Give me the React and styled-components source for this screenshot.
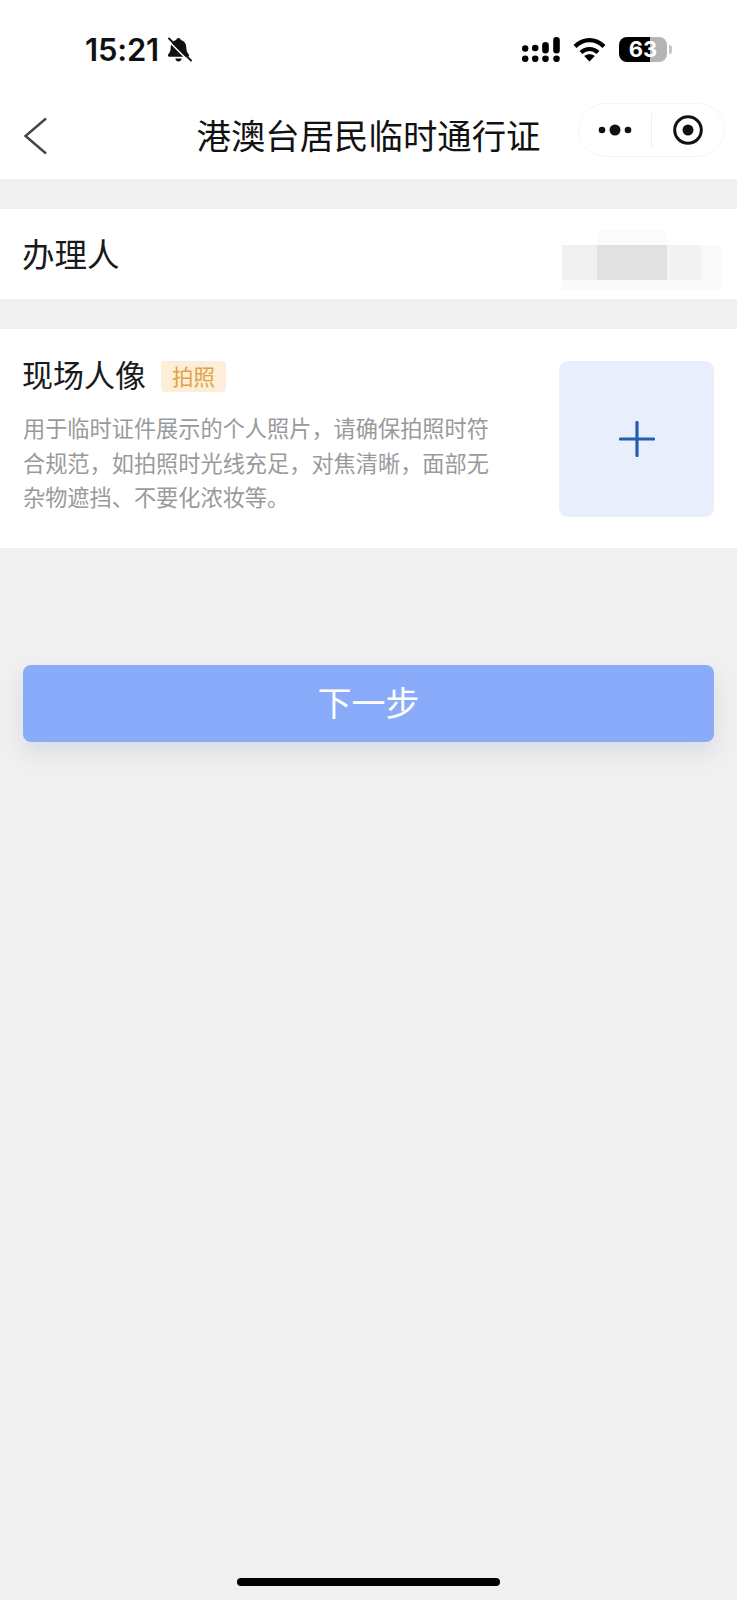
import React from 'react';
import styled, { createGlobalStyle } from 'styled-components';

const Global = createGlobalStyle`
  html, body { margin: 0; padding: 0; background: #f0f0f0; }
  * { box-sizing: border-box; }
`;

const cjk = `"Noto Sans CJK SC", "Noto Sans", sans-serif`;

const Page = styled.div`
  width: 737px;
  height: 1600px;
  display: flex;
  flex-direction: column;
  background: #f0f0f0;
  font-family: ${cjk};
  color: #1a1a1a;
  overflow: hidden;
`;

const Header = styled.header`
  background: #fff;
  height: 179px;
`;

const StatusBar = styled.div`
  height: 100px;
  padding: 37px 70px 0 85px;
  display: flex;
  justify-content: space-between;
  align-items: flex-start;
`;

const StatusGroup = styled.div`
  display: flex;
  align-items: center;
  gap: ${p => p.$gap}px;
  height: 25px;
`;

const Clock = styled.span`
  font-family: Inter, "Liberation Sans", sans-serif;
  font-size: 31px;
  font-weight: 600;
  line-height: 25px;
  letter-spacing: -0.2px;
  color: #111;
`;

const Battery = styled.div`
  position: relative;
  width: 48px;
  height: 25px;
  border-radius: 8px;
  background: linear-gradient(90deg, #000 0 65%, #b4b4b4 65% 100%);
  color: #fff;
  font-family: Inter, "Liberation Sans", sans-serif;
  font-size: 22px;
  font-weight: 700;
  line-height: 25px;
  text-align: center;
  &::after {
    content: '';
    position: absolute;
    right: -5px;
    top: 8px;
    width: 3px;
    height: 9px;
    border-radius: 0 3px 3px 0;
    background: #c4c4c4;
  }
`;

const NavBar = styled.nav`
  height: 79px;
  padding-bottom: 12px;
  display: grid;
  grid-template-columns: 1fr auto 1fr;
  align-items: center;
`;

const BackButton = styled.div`
  padding-left: 23px;
  margin-top: 5px;
  display: flex;
  align-items: center;
`;

const Title = styled.h1`
  margin: 0;
  font-size: 34.4px;
  font-weight: 400;
  line-height: 44px;
  color: #111;
  white-space: nowrap;
`;

const Capsule = styled.div`
  justify-self: end;
  margin: -8px 12px 0 0;
  width: 147px;
  height: 54px;
  border: 1px solid #f5f5f5;
  border-radius: 27px;
  display: flex;
  align-items: center;
`;

const CapsuleSlot = styled.div`
  flex: 1;
  display: flex;
  justify-content: center;
  align-items: center;
`;

const CapsuleDivider = styled.div`
  width: 1px;
  height: 34px;
  background: #eeeeee;
`;

const Section = styled.section`
  background: #fff;
  margin-top: ${p => p.$top}px;
`;

const HandlerRow = styled(Section)`
  height: 90px;
  padding-left: 22px;
  position: relative;
  display: flex;
  align-items: center;
`;

const RowLabel = styled.div`
  font-size: 32.5px;
  line-height: 46px;
  margin-top: -2px;
  color: #1a1a1a;
`;

const Mosaic = styled.div`
  position: absolute;
  left: 562px;
  top: 21px;
  width: 159px;
  height: 60px;
  display: grid;
  grid-template-columns: 35px 70px 35px 19px;
  grid-template-rows: 15px 35px 10px;
`;

const MosaicCell = styled.div`
  background: ${p => p.$c};
  grid-column: ${p => p.$span || 'auto'};
`;

const PortraitRow = styled(Section)`
  height: 219px;
  padding: 32px 23px 31px 22px;
  display: flex;
  justify-content: space-between;
`;

const PortraitInfo = styled.div`
  width: 471px;
  padding-left: 1px;
`;

const PortraitHead = styled.div`
  display: flex;
  align-items: center;
  height: 31px;
  gap: 15px;
  margin-bottom: 18px;
`;

const PortraitLabel = styled.div`
  font-size: 31px;
  line-height: 31px;
  margin: -6px 0 0 -1px;
  white-space: nowrap;
`;

const Tag = styled.span`
  width: 65px;
  height: 31px;
  border-radius: 4px;
  background: #fdeed9;
  color: #e2a243;
  font-size: 21.5px;
  line-height: 30px;
  text-align: center;
`;

const Description = styled.p`
  margin: 0;
  font-size: 22.2px;
  line-height: 34.7px;
  color: #999a9c;
`;

const UploadBox = styled.div`
  width: 155px;
  height: 156px;
  border-radius: 9px;
  background: #e8eefc;
  display: flex;
  align-items: center;
  justify-content: center;
`;

const NextButton = styled.button`
  margin: 117px 23px 0;
  height: 77px;
  border: 0;
  border-radius: 8px;
  background: #8aabf9;
  color: #fff;
  font-family: ${cjk};
  font-size: 34px;
  font-weight: 400;
  line-height: 50px;
  box-shadow: 0 10px 22px rgba(110, 125, 160, 0.18);
  padding: 0 0 3px;
`;

const HomeIndicator = styled.div`
  width: 263px;
  height: 8px;
  margin: auto auto 14px;
  border-radius: 4px;
  background: #000;
`;

const BellOff = () => (
  <svg width="27" height="26" viewBox="0 0 26 26">
    <path fill="#111" d="M13 1c1.300 0 2.100.9 2.300 1.900 3.800 1 5.500 4 5.500 7.600 0 3.200.9 5.200 2.400 6.800.8.900.3 2.400-1 2.400H3.800c-1.300 0-1.800-1.500-1-2.400 1.500-1.600 2.400-3.600 2.400-6.800 0-3.600 1.700-6.600 5.500-7.600C10.900 1.900 11.700 1 13 1z" />
    <path fill="#111" d="M9.800 21.500h6.400c-.3 1.700-1.600 3-3.200 3s-2.900-1.300-3.200-3z" />
    <path stroke="#fff" strokeWidth="1.600" d="M2.500 3.500 23.500 24.500" />
    <path stroke="#111" strokeWidth="1.800" strokeLinecap="round" d="M3.500 1.500 25.500 23.500" />
  </svg>
);

const Signal = () => (
  <svg width="38" height="25" viewBox="0 0 38 25" fill="#000">
    <circle cx="3.200" cy="11.500" r="3.200" />
    <circle cx="3.200" cy="21.800" r="3.200" />
    <circle cx="13.200" cy="11" r="3.300" />
    <circle cx="13.200" cy="21.800" r="3.300" />
    <rect x="20.200" y="5" width="6.600" height="11.500" rx="3.300" />
    <circle cx="23.500" cy="21.800" r="3.300" />
    <rect x="31.200" y="0" width="6.600" height="16.500" rx="3.300" />
    <circle cx="34.500" cy="21.800" r="3.300" />
  </svg>
);

const Wifi = () => (
  <svg width="33" height="25" viewBox="0 0 33 25">
    <path fill="none" stroke="#000" strokeWidth="4.200" d="M2 9.500C10.500 1 22.500 1 31 9.500" />
    <path fill="none" stroke="#000" strokeWidth="4.200" d="M8 15.500c5-4.700 12-4.700 17 0" />
    <path fill="#000" d="M16.500 24.500 11.200 19c3-2.400 7.600-2.400 10.600 0z" />
  </svg>
);

const Chevron = () => (
  <svg width="26" height="40" viewBox="0 0 26 40" fill="none">
    <path d="M23 2.500 2.500 20 23 37.500" stroke="#444" strokeWidth="2.400" />
  </svg>
);

const Dots = () => (
  <svg width="34" height="14" viewBox="0 0 34 14" fill="#111">
    <circle cx="4" cy="7" r="3.300" />
    <circle cx="17" cy="7" r="5.500" />
    <circle cx="30" cy="7" r="3.300" />
  </svg>
);

const Target = () => (
  <svg width="32" height="32" viewBox="0 0 32 32">
    <circle cx="16" cy="16" r="13.300" fill="none" stroke="#111" strokeWidth="3" />
    <circle cx="16" cy="16" r="5.500" fill="#111" />
  </svg>
);

const Plus = () => (
  <svg width="36" height="36" viewBox="0 0 36 36">
    <path d="M18 1.500v33M1.500 18h33" stroke="#2160ae" strokeWidth="3.200" strokeLinecap="round" />
  </svg>
);

export default function App() {
  return (
    <Page>
      <Global />
      <Header>
        <StatusBar>
          <StatusGroup $gap={6}>
            <Clock>15:21</Clock>
            <BellOff />
          </StatusGroup>
          <StatusGroup $gap={13}>
            <Signal />
            <Wifi />
            <Battery>63</Battery>
          </StatusGroup>
        </StatusBar>
        <NavBar>
          <BackButton><Chevron /></BackButton>
          <Title>港澳台居民临时通行证</Title>
          <Capsule>
            <CapsuleSlot><Dots /></CapsuleSlot>
            <CapsuleDivider />
            <CapsuleSlot><Target /></CapsuleSlot>
          </Capsule>
        </NavBar>
      </Header>

      <HandlerRow $top={30}>
        <RowLabel>办理人</RowLabel>
        <Mosaic aria-hidden="true">
          <MosaicCell $c="#ffffff" />
          <MosaicCell $c="#fbfbfb" />
          <MosaicCell $c="#ffffff" />
          <MosaicCell $c="#ffffff" />
          <MosaicCell $c="#f0f0f0" />
          <MosaicCell $c="#e1e1e1" />
          <MosaicCell $c="#f3f3f3" />
          <MosaicCell $c="#f9f9f9" />
          <MosaicCell $c="#fafafa" $span="1 / -1" />
        </Mosaic>
      </HandlerRow>

      <PortraitRow $top={30}>
        <PortraitInfo>
          <PortraitHead>
            <PortraitLabel>现场人像</PortraitLabel>
            <Tag>拍照</Tag>
          </PortraitHead>
          <Description>
            用于临时证件展示的个人照片，请确保拍照时符合规范，如拍照时光线充足，对焦清晰，面部无杂物遮挡、不要化浓妆等。
          </Description>
        </PortraitInfo>
        <UploadBox><Plus /></UploadBox>
      </PortraitRow>

      <NextButton>下一步</NextButton>
      <HomeIndicator />
    </Page>
  );
}
